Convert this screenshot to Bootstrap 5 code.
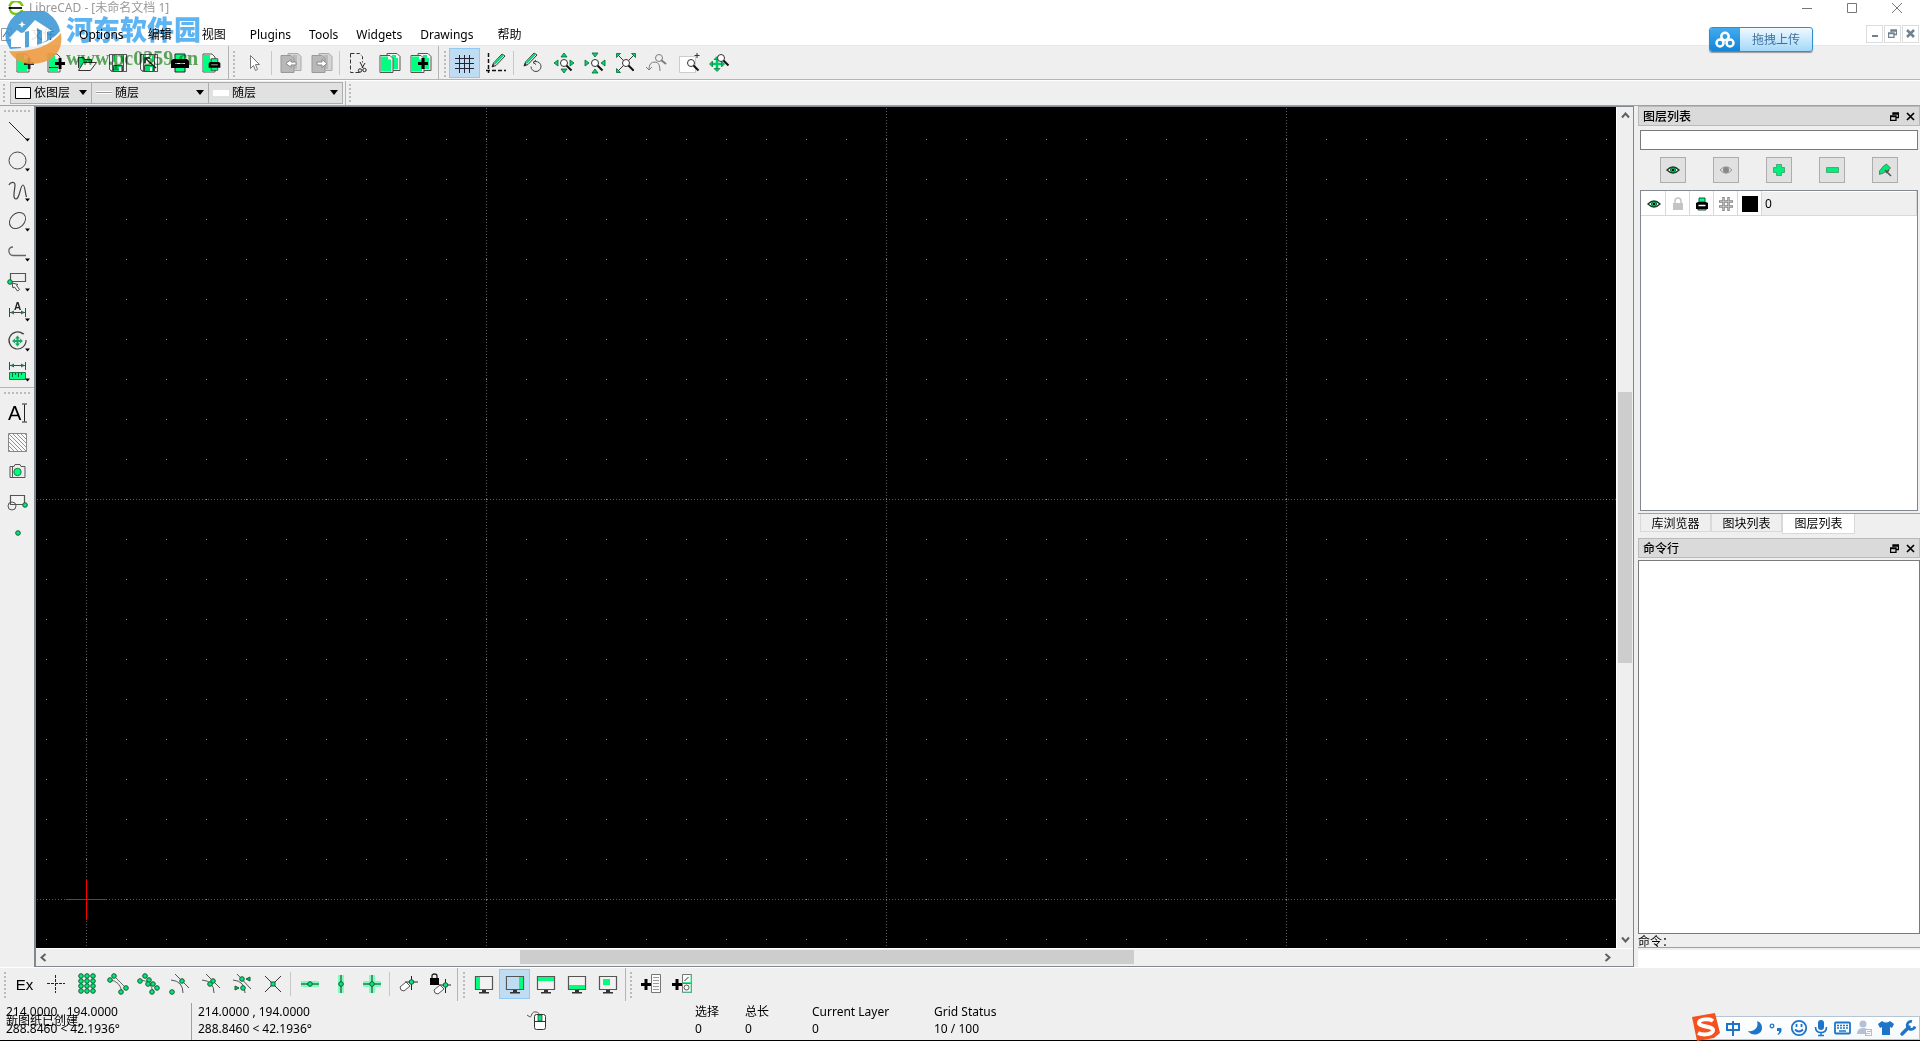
<!DOCTYPE html>
<html lang="zh-CN">
<head>
<meta charset="utf-8">
<meta name="viewport" content="width=device-width, initial-scale=1">
<title>LibreCAD - [未命名文档 1]</title>
<link href="https://cdn.jsdelivr.net/npm/bootstrap@5.3.0/dist/css/bootstrap.min.css" rel="stylesheet">
<style>
:root{--g:#00ff7f;--face:#efefef;--line:#b4b4b4}
body{font-family:"Noto Sans","Noto Sans CJK SC",sans-serif;font-size:12px;line-height:16px;color:#000;background:var(--face);height:100vh;overflow:hidden}
.titlebar{height:22px;background:#fff;color:#999;padding:0 17px 7px 8px}
.titlebar .brand{gap:5px}
.titlebar .syswin{gap:33px}
.winbtn{border:0;background:none;padding:0;width:12px;height:14px;color:#777;display:flex;align-items:center}
.menus{height:24px;background:#fff;border-bottom:1px solid #e8e8e8;padding:0 1px 0 0}
.menus .nav-link{color:#000;padding:5px 9px 3px}
.menus .nav-link.cjk{padding:5px 15px 3px}
.docicon{width:16px;height:24px}
.mdi{gap:1px}
.mdi button{width:17px;height:18px;border:1px solid #dcdcdc;background:#fff;padding:0;color:#71808f;display:flex;align-items:center;justify-content:center}
.bar{height:34px;border-bottom:1px solid var(--line)}
.bar .section{border-right:1px solid var(--line);padding:2px 2px 0 1px;height:33px}
.bar .section:last-child{border-right:0}
.grip{width:2px;height:26px;margin:3px 3px 0 3px;background:repeating-linear-gradient(#bbb 0 2px,transparent 2px 4px)}
.grip.wide{margin-left:4px}
.tool{width:31px;height:30px;padding:0;border:1px solid transparent;border-radius:0;display:flex;align-items:center;justify-content:center;color:#333;line-height:1}
.tool:hover{background:#dcebf7}
.tool.active{background:#c0dcf3!important;border-color:#90c8f6!important}
.tool.exbtn{font:15px "Liberation Sans",sans-serif;color:#000}
.split{width:1px;height:24px;background:#c8c8c8;margin:3px 3px 0 2px}
.pic{width:20px;height:20px;display:block;flex:none;overflow:visible}
.props{height:26px;border-bottom:1px solid #a0a0a0;border-top:1px solid #fff}
.props .grip{height:20px;margin-top:3px}
.combo{position:relative;margin-right:-1px}
.combo select{appearance:none;border:1px solid #adadad;background:#e1e1e1;height:22px;width:100%;border-radius:0;padding:0 16px 1px 23px;font-size:12px;line-height:18px;color:#000;margin-top:1px}
.combo svg{position:absolute;left:5px;top:6px;width:16px;height:12px;pointer-events:none}
.combo svg.tri{left:auto;right:5px;top:9px;width:8px;height:5px}
.c1{width:82px;margin-left:2px}.c2{width:118px}.c3{width:135px}
.propend{border-left:1px solid var(--line);margin-left:3px}
.side{width:34px;background:var(--face)}
.side .tool{width:34px;padding-left:1px}
.side .vgrip{height:2px;width:26px;margin:4px;background:repeating-linear-gradient(90deg,#bbb 0 2px,transparent 2px 4px)}
.side .rule{height:1px;background:var(--line);margin:1px 0 4px}
.canvasbox{border:2px solid #828790;border-top-width:1px;border-bottom-width:1px;border-right-width:1px;min-width:0}
.view{background:#000;min-height:0}
.view svg{width:100%;height:100%;display:block}
.vbar{width:17px;border-left:1px solid #fff;padding:5px 1px}
.hbar{height:18px;border-top:1px solid #fff;padding:1px 22px 2px 4px}
.thumb{background:#cdcdcd}
.arrowbtn{border:0;background:none;padding:0;color:#606060;display:flex;align-items:center;justify-content:center}
.dock{width:286px;padding-left:4px}
.docktitle{height:20px;background:#dadada;border:1px solid #b9b9b9;padding:0 4px;font-weight:400}
.docktitle h2{font-size:12px;line-height:16px;margin:0;font-family:"Noto Sans CJK SC",sans-serif}
.docktitle .acts{gap:7px}
.docktitle button{border:0;background:none;padding:0;width:9px;height:9px;display:flex;color:#000}
.filterbox{height:20px;border:1px solid #7a7a7a;border-radius:0;padding:0 3px;font-size:12px;margin:4px 2px 7px;width:auto}
.layerbtns{gap:27px;height:26px}
.layerbtns button{width:26px;height:26px;background:#e1e1e1;border:1px solid #adadad;border-radius:0;padding:0;display:flex;align-items:center;justify-content:center}
.layerlist{margin:7px 2px 2px;border:1px solid #828790;background:#fff;height:321px}
.layerlist table{width:100%;border-collapse:collapse;table-layout:fixed}
.layerlist td{height:24px;border:1px solid #d8d8d8;border-top-color:#fff;border-left-color:#fff;padding:0;width:24px}
.layerlist td .pic{width:16px;height:16px;margin:auto}
.layerlist td.lname{width:auto;background:var(--face);padding-left:3px}
.docktabs{border-top:1px solid #a0a0a0;height:25px;padding-left:2px}
.docktabs .nav-link{border:1px solid #d9d9d9;border-top:0;border-radius:0;background:var(--face);color:#000;padding:0;width:71px;height:18px;line-height:17px;text-align:center;font-family:"Noto Sans CJK SC",sans-serif}
.docktabs .nav-link.active{background:#fff;height:20px;line-height:18px;width:73px;color:#000}
.cmdlog{border:1px solid #7a7a7a;background:#fff;margin-top:2px;resize:none;border-radius:0;padding:2px;display:block;width:100%}
.cmdlabel{line-height:13px;font-family:"Noto Sans CJK SC",sans-serif;border-bottom:1px solid #a0a0a0}
.cmdinput{border:0;background:#fff;height:17px;margin-top:2px;padding:0 2px;width:100%;display:block}
.foot{border-top:1px solid #fff;border-bottom:0}
.foot .section{padding-top:1px}
.status{height:40px;border-bottom:1px solid #000;line-height:17px;padding-top:2px}
.status p{margin:0;white-space:pre}
.s1{width:191px;padding-left:6px;position:relative}
.s1 .note{position:absolute;left:6px;top:9px}
.s2{width:191px;padding-left:6px;border-left:1px solid #a0a0a0}
.s3{width:313px}.s4{width:50px}.s5{width:67px}.s6{width:122px}
.upload{position:absolute;right:107px;top:27px;width:104px;height:25px;border:1px solid #2e8fd6;border-radius:3px;padding:0;overflow:hidden;background:linear-gradient(#f0f9ff,#a3d8f8);color:#3d6f9e;box-shadow:0 1px 1px #999;font-size:12px}
.upload .cloud{width:30px;height:23px;background:linear-gradient(#41abee,#1285d8)}
.ime{position:absolute;right:0;bottom:1px;height:24px;width:217px;border:1px solid #b4c5d5;background:linear-gradient(#fff,#f6fafd);padding-left:18px;color:#1e74c8}
.ime button{border:0;background:none;padding:0;width:22px;height:22px;display:flex;align-items:center;justify-content:center;color:inherit}
.ime .slogo{position:absolute;left:-13px;top:-4px;width:30px;height:28px}
.ime .pic{width:18px;height:18px}
.wm{position:absolute;left:4px;top:11px;pointer-events:none;width:210px;height:58px}
.wm svg{width:58px;height:56px;opacity:.88}
.wm .wtext{mix-blend-mode:multiply}
.wm .w1{font:900 27px/32px "Noto Sans CJK SC",sans-serif;color:#5db4f3;margin-top:-2px}
.wm .w2{font:bold 20px/20px "Liberation Serif",serif;color:#5fae5f;margin-top:3px}
</style>
<script src="https://cdn.jsdelivr.net/npm/bootstrap@5.3.0/dist/js/bootstrap.bundle.min.js"></script>
</head>
<body class="d-flex flex-column position-relative">
<svg width="0" height="0" class="position-absolute" aria-hidden="true">
<defs>
<g id="page"><path d="M2 1h9l3 3v15h-12z" fill="#f4f4f4" stroke="#555"/><path d="M3 2h6v4h3v12H3z" fill="#00ff7f"/></g>
<g id="plus"><path d="M0 4h3.500V0h3v4H10v3H6.500v4h-3V7H0z" fill="#000"/></g>
<g id="prn"><path d="M5 1h10v6H5zM5 13h10v6H5z" fill="#00ff7f" stroke="#222"/><path d="M1 8l2-2h14l2 2v7H1z" fill="#000"/><path d="M5 10.500h10" stroke="#fff"/></g>
<g id="flop"><path d="M1.500 1.500h17v17h-15l-2-2z" fill="#e8e8e8" stroke="#555"/><path d="M1.500 1.500h3v17l-3-2zM15.500 1.500h3v17h-3z" fill="#f2f2f2" stroke="#555"/><path d="M5 2h2v7H5zM13 2h2v7h-2z" fill="#00e070"/><path d="M7 2h6v7H7z" fill="#fff"/><path d="M5.500 12.500h9v6h-9z" fill="#00d870" stroke="#444"/><path d="M11 14h2v4h-2z" fill="#fff"/></g>
<g id="pages"><path d="M7 .5h10l3 3v14H7z" fill="#f4f4f4" stroke="#555"/><path d="M12 2h4v3h2v11h-6z" fill="#00ff7f"/><path d="M0 2.500h10l3 3v14H0z" fill="#f4f4f4" stroke="#555"/><path d="M1 3.500h7v3h3v12H1z" fill="#00ff7f"/></g>
<g id="gpages"><path d="M7 .5h10l3 3v14H7z" fill="#d4d4d4" stroke="#aaa"/><path d="M12 2h4v14h-4z" fill="#bbb"/><path d="M0 2.500h10l3 3v14H0z" fill="#b8b8b8" stroke="#999"/></g>
<g id="mag"><circle cx="8" cy="8" r="3.500" fill="#fff" stroke="#333"/><path d="M10.500 10.500l5 5" stroke="#111" stroke-width="2"/></g>
<g id="pencil"><path d="M1 13l1.500-4L11 0l3 2-9 9.500z" fill="#fff" stroke="#333"/><path d="M3.500 10L12 1" stroke="#00d870" stroke-width="2"/><path d="M1 13l1-3 2 1z" fill="#222"/></g>
<g id="nd"><circle r="2.300" fill="#00e878" stroke="#155c36" stroke-width="1"/></g>
<g id="mon"><path d="M1.500 2.500h17v13h-17z" fill="#f2f2f2" stroke="#555" stroke-width="1.200"/><path d="M8 16h4v2H8zM5 18h10v1.500H5z" fill="#333"/></g>
<g id="eye"><path d="M2 8q6-6 12 0q-6 6-12 0z" fill="#fff" stroke="#153c28" stroke-width="1.400"/><circle cx="8" cy="8" r="2.500" fill="#00e878" stroke="#052"/><circle cx="8" cy="8" r="1.200"/></g>
<g id="float"><path d="M3 3V1h5.500v4.500H6.500M3 2h6M.5 4h5.500v4.500H.5zM0 4.500h6" fill="none" stroke="currentColor" stroke-width="1.300"/></g>
<g id="ex"><path d="M1 1l7 7M8 1L1 8" stroke="currentColor" stroke-width="1.700" fill="none"/></g>
<g id="more"><path d="M17 17.500h5l-2.500 3z" fill="#000"/></g>
<pattern id="dots" width="40" height="40" patternUnits="userSpaceOnUse"><rect x="10" y="32" width="1" height="1" fill="#888"/></pattern>
<pattern id="metaV" width="400" height="3" patternUnits="userSpaceOnUse"><rect x="50" y="1" width="1" height="1" fill="#5a5a5a"/></pattern>
<pattern id="metaH" width="3" height="400" patternUnits="userSpaceOnUse"><rect x="1" y="392" width="1" height="1" fill="#5a5a5a"/></pattern>
<pattern id="hat" width="4" height="4" patternUnits="userSpaceOnUse"><path d="M0 0l4 4" stroke="#666" stroke-width=".7"/></pattern>
</defs></svg>

<header class="titlebar d-flex align-items-center justify-content-between">
 <div class="brand d-flex align-items-center">
  <svg width="16" height="14" viewBox="0 0 16 14"><circle cx="8" cy="6.500" r="6.500" fill="none" stroke="#7ac70c" stroke-width="2.500"/><path d="M0 7h16" stroke="#fff" stroke-width="4"/><path d="M1 7h13" stroke="#222" stroke-width="2"/><circle cx="2" cy="7" r="1.500"/></svg>
  <span>LibreCAD - [未命名文档 1]</span>
 </div>
 <div class="syswin d-flex">
  <button class="winbtn" aria-label="最小化"><svg width="12" height="12"><path d="M1 6.500h10" stroke="currentColor"/></svg></button>
  <button class="winbtn" aria-label="最大化"><svg width="12" height="12"><path d="M1.500 1.500h9v9h-9z" fill="none" stroke="currentColor"/></svg></button>
  <button class="winbtn" aria-label="关闭"><svg width="12" height="12"><path d="M1 1l10 10M11 1L1 11" stroke="currentColor"/></svg></button>
 </div>
</header>

<div class="menus d-flex align-items-center justify-content-between">
 <nav class="nav align-items-center flex-nowrap">
  <svg class="docicon" viewBox="0 0 16 24"><path d="M1.500 6.500h10v12h-10z" fill="#fff" stroke="#999"/><path d="M3 15l4-6 5 8" fill="none" stroke="#456"/></svg>
  <a class="nav-link cjk" href="#">文件</a><a class="nav-link" href="#">Options</a><a class="nav-link cjk" href="#">编辑</a><a class="nav-link cjk" href="#">视图</a><a class="nav-link" href="#">Plugins</a><a class="nav-link" href="#">Tools</a><a class="nav-link" href="#">Widgets</a><a class="nav-link" href="#">Drawings</a><a class="nav-link cjk" href="#">帮助</a>
 </nav>
 <div class="mdi d-flex">
  <button aria-label="最小化子窗口"><svg width="9" height="9"><path d="M2 7h6" stroke="currentColor" stroke-width="2"/></svg></button>
  <button aria-label="还原子窗口"><svg width="9" height="9"><use href="#float"/></svg></button>
  <button aria-label="关闭子窗口"><svg width="9" height="9"><path d="M1 1l7 7M8 1L1 8" stroke="currentColor" stroke-width="2.500"/></svg></button>
 </div>
</div>

<div class="bar d-flex">
 <div class="section d-flex"><span class="grip"></span>
  <button class="btn tool" aria-label="新建"><svg class="pic"><use href="#page"/><g opacity=".8"><use href="#plus" x="9" y="5"/></g></svg></button>
  <button class="btn tool" aria-label="从模板新建"><svg class="pic"><use href="#page"/><path d="M3 14.500h9" stroke="#333"/><use href="#plus" x="9" y="5"/></svg></button>
  <button class="btn tool" aria-label="打开"><svg class="pic"><path d="M1.500 15V4.500h5l1 2h7v3" fill="#00e070" stroke="#333"/><path d="M1.500 17.500l5-8h13l-6 8z" fill="#f4f4f4" stroke="#333"/></svg></button>
  <button class="btn tool" aria-label="保存"><svg class="pic"><use href="#flop"/></svg></button>
  <button class="btn tool" aria-label="另存为"><svg class="pic"><use href="#flop"/><path d="M6 5l11 10M6 10V5h5" stroke="#222" stroke-width="1.500" fill="none"/></svg></button>
  <button class="btn tool" aria-label="打印"><svg class="pic"><use href="#prn"/></svg></button>
  <button class="btn tool" aria-label="打印预览"><svg class="pic"><use href="#page"/><g transform="translate(7 5) scale(.65)"><use href="#prn"/></g></svg></button>
 </div>
 <div class="section d-flex"><span class="grip"></span>
  <button class="btn tool" aria-label="选择"><svg class="pic"><path d="M6.500 2.500v13l3-3 2 5 2-1-2-5h4z" fill="#fff" stroke="#777"/></svg></button>
  <span class="split"></span>
  <button class="btn tool" aria-label="撤销"><svg class="pic"><use href="#gpages"/><path d="M5 10.500l5-4v2.500h5v3h-5v2.500z" fill="#fff" stroke="#888"/></svg></button>
  <button class="btn tool" aria-label="重做"><svg class="pic"><use href="#gpages"/><path d="M15 10.500l-5-4v2.500H5v3h5v2.500z" fill="#fff" stroke="#888"/></svg></button>
  <span class="split"></span>
  <button class="btn tool" aria-label="剪切"><svg class="pic"><path d="M1.500.500h9l3 3v6M1.500.500v19h9" fill="none" stroke="#333" stroke-dasharray="4 2"/><path d="M11 9l3 6M16 10l-3 5" stroke="#222"/><circle cx="11" cy="17.500" r="1.700" fill="none" stroke="#222"/><circle cx="15.500" cy="17" r="1.700" fill="none" stroke="#222"/></svg></button>
  <button class="btn tool" aria-label="复制"><svg class="pic"><use href="#pages"/></svg></button>
  <button class="btn tool" aria-label="粘贴"><svg class="pic"><use href="#pages"/><use href="#plus" x="7" y="5"/></svg></button>
 </div>
 <div class="section d-flex"><span class="grip wide"></span>
  <button class="btn tool active" aria-label="网格"><svg class="pic"><path d="M4.500 2v18M9.500 2v18M14.500 2v18M0 5.500h19M0 10.500h19M0 15.500h19" stroke="#223"/></svg></button>
  <button class="btn tool" aria-label="草稿模式"><svg class="pic"><path d="M2.500 0v20M0 17.500h20" stroke="#111" stroke-width="1.500" stroke-dasharray="4 2"/><use href="#pencil" x="5" y="1"/></svg></button>
  <span class="split"></span>
  <button class="btn tool" aria-label="重绘"><svg class="pic"><use href="#pencil" x="0" y="0"/><path d="M10 9.500a5 5 0 1 1-2 4M13 7l-3 2.500 3 2" fill="none" stroke="#444"/></svg></button>
  <button class="btn tool" aria-label="放大"><svg class="pic"><use href="#mag" x="2" y="2"/><g fill="#00d870" stroke="#063" stroke-width=".8"><path d="M10 0l3 4H7zM10 20l3-4H7zM0 10l4-3v6zM20 10l-4-3v6z"/></g></svg></button>
  <button class="btn tool" aria-label="缩小"><svg class="pic"><use href="#mag" x="2" y="2"/><g fill="#00d870" stroke="#063" stroke-width=".8"><path d="M10 4l3-4H7zM10 16l3 4H7zM4 10L0 7v6zM16 10l4-3v6z"/></g></svg></button>
  <button class="btn tool" aria-label="自动缩放"><svg class="pic"><path d="M2 2l16 16M18 2L2 18" stroke="#333"/><use href="#mag" x="2" y="2"/><g fill="#00d870" stroke="#063" stroke-width=".8"><path d="M.5.500h4l-4 4zM19.500.500h-4l4 4zM.5 19.500h4l-4-4z"/></g></svg></button>
  <button class="btn tool" aria-label="上一视图"><svg class="pic" opacity=".6"><circle cx="12" cy="5" r="3.500" fill="none" stroke="#333"/><path d="M14 7l5 4" stroke="#333" stroke-width="2"/><path d="M2 16q0-7 6-7 5 0 5 9M-1 14l3 3 3-3" fill="none" stroke="#333"/></svg></button>
  <button class="btn tool" aria-label="窗口缩放"><svg class="pic"><path d="M1.500 3.500h16v16h-16z" fill="#fff" stroke="#ccc"/><use href="#mag" x="5" y="2"/><path d="M19 0v5M16.500 2.500h5" stroke="#333"/></svg></button>
  <button class="btn tool" aria-label="平移"><svg class="pic"><path d="M8 5v12M2 11h12" stroke="#00c868" stroke-width="2.500"/><path d="M8 3.500l-3 3h6zM8 18.500l-3-3h6zM.5 11l3-3v6zM15.500 11l-3-3v6z" fill="#00c868" stroke="#0a7a44" stroke-width=".7"/><g transform="translate(4 -3)"><use href="#mag"/></g></svg></button>
 </div>
</div>

<div class="props d-flex"><span class="grip"></span>
 <div class="combo c1"><select aria-label="颜色"><option>依图层</option></select><svg><path d="M.5.500h15v11H.5z" fill="#fff" stroke="#000"/></svg><svg class="tri"><path d="M0 0h8L4 5z"/></svg></div>
 <div class="combo c2"><select aria-label="线宽"><option>随层</option></select><svg><path d="M0 5.500h16" stroke="#fff" stroke-width="3"/><path d="M0 5.500h16" stroke="#999"/></svg><svg class="tri"><path d="M0 0h8L4 5z"/></svg></div>
 <div class="combo c3"><select aria-label="线型"><option>随层</option></select><svg><path d="M0 3h16v6H0z" fill="#fff"/></svg><svg class="tri"><path d="M0 0h8L4 5z"/></svg></div>
 <div class="propend"><span class="grip d-block"></span></div>
</div>

<main class="d-flex flex-fill" style="min-height:0">
 <aside class="side d-flex flex-column">
  <span class="vgrip"></span>
  <button class="btn tool" aria-label="直线"><svg class="pic"><path d="M1 1l17 17" stroke="#222"/><use href="#more"/></svg></button>
  <button class="btn tool" aria-label="圆"><svg class="pic"><circle cx="9.500" cy="9.500" r="8.500" fill="none" stroke="#444"/><use href="#more"/></svg></button>
  <button class="btn tool" aria-label="曲线"><svg class="pic"><path d="M1 4C2 1 7 0 7 4 7 8 4 18 8 18 12 18 12 4 15 4 17 4 17 12 18.500 16" fill="none" stroke="#444" stroke-width="1.200"/><use href="#more"/></svg></button>
  <button class="btn tool" aria-label="椭圆"><svg class="pic"><ellipse cx="9.500" cy="9.500" rx="9" ry="7" transform="rotate(-45 9.500 9.500)" fill="none" stroke="#444"/><use href="#more"/></svg></button>
  <button class="btn tool" aria-label="多段线"><svg class="pic"><path d="M5 6C-1 6 0 14 5 14.500H18" fill="none" stroke="#666" stroke-width="1.300"/><use href="#more"/></svg></button>
  <button class="btn tool" aria-label="选择工具"><svg class="pic"><path d="M2.500 2.500h15v8h-15z" fill="none" stroke="#555" stroke-width="1.200"/><use href="#nd" x="2" y="11"/><path d="M4 12l1 5 1.500-1 3 4 2-1.500-3-4 1.500-1z" fill="#fff" stroke="#444"/><use href="#more"/></svg></button>
  <button class="btn tool" aria-label="标注"><svg class="pic"><path d="M1.500 7v9M17.500 7v9M2 11.500h15" stroke="#444"/><path d="M2 11.500l4-2v4zM17 11.500l-4-2v4z" fill="#1a7a4a"/><text x="6" y="9" font-family="Liberation Sans" font-size="10" font-weight="700" fill="#222">A</text><use href="#more"/></svg></button>
  <button class="btn tool" aria-label="修改"><svg class="pic"><path d="M15 3a8.500 8.500 0 1 0 3 6M12 1l4 2" fill="none" stroke="#444" stroke-width="1.200"/><path d="M9.500 6v8M5.500 10h8" stroke="#1aa864" stroke-width="2"/><path d="M9.500 4.500l-2.500 3h5zM9.500 15.500l-2.500-3h5zM4 10l3-2.500v5zM15 10l-3-2.500v5z" fill="#1aa864"/><use href="#more"/></svg></button>
  <button class="btn tool" aria-label="测量"><svg class="pic"><path d="M1.500 1v8M17.500 1v8M2 4.500h15" stroke="#444"/><path d="M2 4.500l4-2v4zM17 4.500l-4-2v4z" fill="#1a7a4a"/><path d="M1.500 11.500h16v7h-16z" fill="#00ff7f" stroke="#1a7a4a"/><path d="M4.500 12v4M7.500 12v2M10.500 12v4M13.500 12v2" stroke="#063"/><use href="#more"/></svg></button>
  <span class="rule"></span><span class="vgrip mt-0"></span>
  <button class="btn tool" aria-label="多行文字"><svg class="pic"><text x="0" y="17" font-family="Liberation Sans" font-size="20" fill="#000">A</text><path d="M16.500 1.500v17M14 1h5M14 19h5" stroke="#222" fill="none"/></svg></button>
  <button class="btn tool" aria-label="填充"><svg class="pic"><path d="M.5.500h18v18H.5z" fill="#fafafa"/><path d="M.5.500h18v18H.5z" fill="url(#hat)" stroke="#888"/></svg></button>
  <button class="btn tool" aria-label="图像"><svg class="pic"><path d="M2 3.500h4l1-2h5l1 2h4v11H2zM4.500 4v10" fill="#eee" stroke="#555"/><circle cx="9.500" cy="9" r="3.700" fill="#00ff7f" stroke="#1a7a4a"/></svg></button>
  <button class="btn tool" aria-label="块"><svg class="pic"><path d="M2.500 2.500h14v9h-14z" fill="#f4f4f4" stroke="#555" stroke-width="1.200"/><circle cx="4" cy="13" r="4" fill="none" stroke="#555"/><use href="#nd" x="17" y="12"/></svg></button>
  <button class="btn tool" aria-label="点"><svg class="pic"><use href="#nd" x="10" y="10"/></svg></button>
 </aside>

 <section class="canvasbox flex-fill d-flex flex-column">
  <div class="d-flex flex-fill" style="min-height:0">
   <div class="view flex-fill">
    <svg shape-rendering="crispEdges" role="img" aria-label="绘图区">
     <rect width="100%" height="100%" fill="url(#metaV)"/><rect width="100%" height="100%" fill="url(#metaH)"/><rect width="100%" height="100%" fill="url(#dots)"/>
     <path d="M30 792.500h41M50.500 772v41" stroke="#f00"/>
    </svg>
   </div>
   <div class="vbar d-flex flex-column">
    <button class="arrowbtn" aria-label="上移"><svg width="9" height="7"><path d="M1 5.500l3.500-4 3.500 4" fill="none" stroke="currentColor" stroke-width="2"/></svg></button>
    <div style="flex:273"></div><div class="thumb" style="flex:271"></div><div style="flex:273"></div>
    <button class="arrowbtn" aria-label="下移"><svg width="9" height="7"><path d="M1 1.500l3.500 4 3.500-4" fill="none" stroke="currentColor" stroke-width="2"/></svg></button>
   </div>
  </div>
  <div class="hbar d-flex">
   <button class="arrowbtn" aria-label="左移"><svg width="7" height="9"><path d="M5.500 1l-4 3.500 4 3.500" fill="none" stroke="currentColor" stroke-width="2"/></svg></button>
   <div style="flex:473"></div><div class="thumb" style="flex:613"></div><div style="flex:470"></div>
   <button class="arrowbtn" aria-label="右移"><svg width="7" height="9"><path d="M1.500 1l4 3.500-4 3.500" fill="none" stroke="currentColor" stroke-width="2"/></svg></button>
  </div>
 </section>

 <aside class="dock d-flex flex-column">
  <div class="docktitle d-flex align-items-center justify-content-between flex-shrink-0"><h2>图层列表</h2><span class="acts d-flex"><button aria-label="浮动"><svg width="9" height="9"><use href="#float"/></svg></button><button aria-label="关闭图层列表"><svg width="9" height="9"><use href="#ex"/></svg></button></span></div>
  <input class="filterbox flex-shrink-0" type="text" aria-label="图层过滤">
  <div class="layerbtns d-flex justify-content-center flex-shrink-0">
   <button aria-label="显示全部图层"><svg width="16" height="16"><use href="#eye"/></svg></button>
   <button aria-label="隐藏全部图层"><svg width="16" height="16"><path d="M2 8q6-6.500 12 0q-6 6.500-12 0z" fill="#ddd" stroke="#999"/><circle cx="8" cy="8" r="3" fill="#888"/></svg></button>
   <button aria-label="添加图层"><svg width="16" height="16"><path d="M5.500 2.500h5v3h3v5h-3v3h-5v-3h-3v-5h3z" fill="#00f07a" stroke="#4aa87a"/></svg></button>
   <button aria-label="删除图层"><svg width="16" height="16"><path d="M2.500 5.500h12v5h-12z" fill="#00f07a" stroke="#4aa87a"/></svg></button>
   <button aria-label="编辑图层"><svg width="16" height="16"><path d="M2.500 12.500V9l4-5 3-2 4 4-2 2-5 3z" fill="#00e878" stroke="#555" stroke-width=".7"/><path d="M8 8l6 6M9 11l3-3" stroke="#555" stroke-width="1.600"/></svg></button>
  </div>
  <div class="layerlist flex-shrink-0">
   <table aria-label="图层"><tbody><tr>
    <td><svg class="pic"><use href="#eye"/></svg></td>
    <td><svg class="pic"><path d="M3 7h10v7H3z" fill="#c4c4c4"/><path d="M5 7V5q0-3 3-3t3 3v2" fill="none" stroke="#c4c4c4" stroke-width="1.500"/></svg></td>
    <td><svg class="pic"><path d="M5 2h6v4H5zM4 11h8v3H4z" fill="#00ff7f" stroke="#154"/><path d="M2 7l2-1h8l2 1v6H2z"/><path d="M4.500 9.500h7" stroke="#fff" stroke-width="1.500"/></svg></td>
    <td><svg class="pic"><path d="M5.500 1v14M10.500 1v14M1 5.500h14M1 10.500h14" stroke="#888" stroke-width="2.500"/><path d="M5.500 2v12M10.500 2v12M2 5.500h12M2 10.500h12" stroke="#ccc" stroke-width=".7"/></svg></td>
    <td><svg class="pic"><path d="M0 0h16v16H0z"/></svg></td>
    <td class="lname">0</td></tr></tbody></table>
  </div>
  <nav class="docktabs nav flex-nowrap align-items-start flex-shrink-0"><a class="nav-link" href="#">库浏览器</a><a class="nav-link" href="#">图块列表</a><a class="nav-link active" href="#">图层列表</a></nav>
  <div class="docktitle d-flex align-items-center justify-content-between flex-shrink-0"><h2>命令行</h2><span class="acts d-flex"><button aria-label="浮动命令行"><svg width="9" height="9"><use href="#float"/></svg></button><button aria-label="关闭命令行"><svg width="9" height="9"><use href="#ex"/></svg></button></span></div>
  <textarea class="cmdlog flex-fill" readonly aria-label="命令历史"></textarea>
  <label class="cmdlabel flex-shrink-0" for="cmd">命令：</label>
  <input class="cmdinput flex-shrink-0" id="cmd" type="text">
 </aside>
</main>

<div class="bar foot d-flex">
 <div class="section d-flex"><span class="grip"></span>
  <button class="btn tool exbtn" aria-label="独占捕捉">Ex</button>
  <button class="btn tool" aria-label="自由捕捉"><svg class="pic"><path d="M9.500 1v18M1 9.500h18" stroke="#222" stroke-dasharray="3 1"/></svg></button>
  <button class="btn tool" aria-label="捕捉网格"><svg class="pic"><g transform="translate(0 -1)"><use href="#nd" x="4" y="3"/><use href="#nd" x="10" y="3"/><use href="#nd" x="16" y="3"/><use href="#nd" x="4" y="8"/><use href="#nd" x="10" y="8"/><use href="#nd" x="16" y="8"/><use href="#nd" x="4" y="13"/><use href="#nd" x="10" y="13"/><use href="#nd" x="16" y="13"/><use href="#nd" x="4" y="18"/><use href="#nd" x="10" y="18"/><use href="#nd" x="16" y="18"/></g></svg></button>
  <button class="btn tool" aria-label="捕捉端点"><svg class="pic"><path d="M6 2l12 12M2 6q10 1 12 12" fill="none" stroke="#666"/><use href="#nd" x="6" y="2"/><use href="#nd" x="2" y="6"/><use href="#nd" x="18" y="14"/><use href="#nd" x="13" y="18"/></svg></button>
  <button class="btn tool" aria-label="捕捉实体上的点"><svg class="pic"><path d="M6 2l12 12M2 6q10 1 12 12" fill="none" stroke="#666"/><use href="#nd" x="6" y="2"/><use href="#nd" x="1" y="7"/><use href="#nd" x="10" y="6"/><use href="#nd" x="9" y="10"/><use href="#nd" x="14" y="10"/><use href="#nd" x="18" y="14"/><use href="#nd" x="13" y="18"/></svg></button>
  <button class="btn tool" aria-label="捕捉中心"><svg class="pic"><path d="M5 0l14 14M1 6q12 1 12 13" fill="none" stroke="#555"/><use href="#nd" x="12" y="7"/><use href="#nd" x="2" y="18"/></svg></button>
  <button class="btn tool" aria-label="捕捉中点"><svg class="pic"><path d="M5 0l14 14M1 6q12 1 12 13" fill="none" stroke="#555"/><use href="#nd" x="12" y="7"/><use href="#nd" x="9" y="10"/></svg></button>
  <button class="btn tool" aria-label="捕捉距离"><svg class="pic"><path d="M5 0l14 15M1 6q12 1 12 13" fill="none" stroke="#555"/><use href="#nd" x="10" y="5"/><use href="#nd" x="11" y="14"/><path d="M18 3v4l-4-2zM3 12v4l4-2z" fill="#00c868" stroke="#155c36"/></svg></button>
  <button class="btn tool" aria-label="捕捉交点"><svg class="pic"><path d="M2 2l16 16M18 2L2 18" stroke="#333"/><path d="M8 8h4v4H8z" fill="#00e878" stroke="#155c36"/></svg></button>
  <span class="split"></span>
  <button class="btn tool" aria-label="限制水平"><svg class="pic"><path d="M1 10h18" stroke="#7dffbd" stroke-width="6"/><path d="M1 10h18" stroke="#222"/><use href="#nd" x="10" y="10"/></svg></button>
  <button class="btn tool" aria-label="限制垂直"><svg class="pic"><path d="M10 1v18" stroke="#7dffbd" stroke-width="6"/><path d="M10 1v18" stroke="#222"/><use href="#nd" x="10" y="10"/></svg></button>
  <button class="btn tool" aria-label="限制正交"><svg class="pic"><path d="M10 1v18M1 10h18" stroke="#7dffbd" stroke-width="6"/><path d="M10 1v18M1 10h18" stroke="#222"/><use href="#nd" x="10" y="10"/></svg></button>
  <span class="split"></span>
  <button class="btn tool" aria-label="设置相对零点"><svg class="pic"><path d="M12.500 2v14M6 8h13" stroke="#222"/><use href="#nd" x="12.500" y="8"/><path d="M1 13l6-5 4 4-6 5-3-1z" fill="#fff" stroke="#555"/></svg></button>
  <button class="btn tool" aria-label="锁定相对零点"><svg class="pic"><path d="M0 4h9v7H0z"/><path d="M2 4V2q0-2 2.500-2T7 2v2" fill="none" stroke="#222" stroke-width="1.300"/><path d="M15.500 5v14M9 11h12" stroke="#222"/><use href="#nd" x="15.500" y="11"/><path d="M4 16l6-5 4 4-6 5-3-1z" fill="#fff" stroke="#555"/></svg></button>
 </div>
 <div class="section d-flex"><span class="grip wide"></span>
  <button class="btn tool" aria-label="左侧停靠"><svg class="pic"><use href="#mon"/><path d="M2 3h4v12H2z" fill="#00ff7f"/></svg></button>
  <button class="btn tool active" aria-label="右侧停靠"><svg class="pic"><use href="#mon"/><path d="M2 3h12v12H2z" fill="#c0dcf3"/><path d="M14 3h4v12h-4z" fill="#00ff7f"/></svg></button>
  <button class="btn tool" aria-label="顶部停靠"><svg class="pic"><use href="#mon"/><path d="M2 3h16v4H2z" fill="#00ff7f"/></svg></button>
  <button class="btn tool" aria-label="底部停靠"><svg class="pic"><use href="#mon"/><path d="M2 11h16v4H2z" fill="#00ff7f"/></svg></button>
  <button class="btn tool" aria-label="浮动停靠"><svg class="pic"><use href="#mon"/><path d="M5 5h7v6H5z" fill="#00ff7f"/></svg></button>
 </div>
 <div class="section d-flex"><span class="grip"></span>
  <button class="btn tool" aria-label="添加菜单"><svg class="pic"><use href="#plus" y="5"/><path d="M10.500.500h9v18h-9z" fill="#fafafa" stroke="#777"/><path d="M12 3.500h6M12 6.500h6M12 9.500h6M12 12.500h6M12 15.500h6" stroke="#999"/></svg></button>
  <button class="btn tool" aria-label="添加工具栏"><svg class="pic"><use href="#plus" y="5"/><path d="M10.500.500h9v18h-9zM10 9.500h9" fill="#fafafa" stroke="#777"/><path d="M19 1v17h-8M11 8.500h8" fill="none" stroke="#40e890"/><path d="M12.500 7l4-4" stroke="#333"/><circle cx="14.500" cy="13.500" r="2.500" fill="none" stroke="#555"/></svg></button>
 </div>
</div>

<footer class="status d-flex">
 <div class="s1"><p>214.0000 , 194.0000</p><p>288.8460 &lt; 42.1936°</p><span class="note">新图纸已创建,</span></div>
 <div class="s2"><p>214.0000 , 194.0000</p><p>288.8460 &lt; 42.1936°</p></div>
 <div class="s3 d-flex align-items-center justify-content-center"><svg class="pic"><path d="M-2 3l3 2c2 0 1-6 6-5 3 0 3 2 4 4" fill="none" stroke="#555"/><rect x="5.500" y="2.500" width="11" height="15" rx="2" fill="#fff" stroke="#333"/><path d="M9 3h4v6H9z" fill="#00e878" stroke="#333" stroke-width=".7"/><path d="M5.500 9.500h11" stroke="#333"/></svg></div>
 <div class="s4"><p>选择</p><p>0</p></div><div class="s5"><p>总长</p><p>0</p></div><div class="s6"><p>Current Layer</p><p>0</p></div><div><p>Grid Status</p><p>10 / 100</p></div>
</footer>

<button class="upload d-flex align-items-center"><span class="cloud d-flex align-items-center justify-content-center"><svg width="20" height="18" fill="none" stroke="#fff" stroke-width="2.500"><circle cx="10" cy="5.500" r="3.700"/><circle cx="5" cy="12" r="3.500"/><circle cx="15" cy="12" r="3.500"/></svg></span><span class="flex-fill text-center">拖拽上传</span></button>

<div class="ime d-flex">
 <svg class="slogo" viewBox="0 0 30 28"><path d="M1 4L24 0l5 20-6 5-17 3z" fill="#f4511e"/><path d="M22 8C18 5 8 6 8 10s14 3 14 7-9 6-15 3" fill="none" stroke="#fff" stroke-width="4"/></svg>
 <button aria-label="中文输入"><svg class="pic" fill="none" stroke="currentColor" stroke-width="2"><path d="M3 5h12v6H3zM9 2v15"/></svg></button>
 <button aria-label="半角"><svg class="pic" fill="currentColor"><path d="M11 2c2 6-2 11-9 10 4 6 14 4 14-3 0-4-2-6-5-7z"/></svg></button>
 <button aria-label="中文标点"><svg class="pic"><circle cx="4" cy="7" r="1.800" fill="none" stroke="currentColor" stroke-width="1.300"/><path d="M9 9h4q2 4-3 7l-.5-1q2-1 1.500-3H9z" fill="currentColor"/></svg></button>
 <button aria-label="表情"><svg class="pic" fill="none" stroke="currentColor" stroke-width="1.800"><circle cx="9" cy="9" r="7.200"/><path d="M6.500 5v3M11.500 5v3M5 10.500q4 4 8 0"/></svg></button>
 <button aria-label="语音"><svg class="pic"><rect x="6" y="1" width="6" height="10" rx="3" fill="currentColor"/><path d="M3.500 8q0 5.500 5.500 5.500T14.500 8M9 13v3M6 16.500h6" fill="none" stroke="currentColor" stroke-width="1.600"/></svg></button>
 <button aria-label="软键盘"><svg class="pic"><rect x="2" y="3.500" width="15" height="11" rx="1" fill="none" stroke="currentColor" stroke-width="1.800"/><path d="M4 6.500h11M4 9h11" stroke="currentColor" stroke-width="1.500" stroke-dasharray="2 1"/><path d="M6 12h7" stroke="currentColor" stroke-width="1.500"/></svg></button>
 <button aria-label="账号"><svg class="pic"><g fill="#b5c0d6"><circle cx="8" cy="5" r="3.500"/><path d="M2 15q0-6 6-6 3 0 4 1v5z"/><path d="M10 10h7v7h-7z"/></g><path d="M15.500 11.500h-4v2h4v2h-4" fill="none" stroke="#fff"/></svg></button>
 <button aria-label="皮肤"><svg class="pic" fill="currentColor"><path d="M5 2q4 3 8 0l4 3-2 4-2-1v8H5V8L3 9 1 5z"/></svg></button>
 <button aria-label="设置"><svg class="pic" fill="none" stroke="currentColor"><path d="M3 15l7-7" stroke-width="3.500" stroke-linecap="round"/><path d="M13 2.500a4 4 0 1 0 3 5" stroke-width="2.800"/></svg></button>
</div>

<div class="wm d-flex">
 <svg viewBox="0 0 58 56"><path d="M2 30A26 26 0 0 1 56 20Q44 36 6 38z" fill="#3b97d6"/><path d="M5 40Q40 42 57 22 60 44 40 51 16 58 5 40z" fill="#f09a3e"/><path d="M7 36V28l-2-1 8-8 8 6-4 1v10zM17 37V22l4-1v16zM25 36V20l-5 1 11-12 17 11-5 1v8l-5 3V20l-5-3v18z" fill="#fff"/><path d="M18 10l1 2.500 2.500 1-2.500 1-1 2.500-1-2.500-2.500-1 2.500-1z" fill="#fff"/></svg>
 <div class="wtext ms-1 mt-1"><div class="w1">河东软件园</div><div class="w2">www.pc0359.cn</div></div>
</div>
</body>
</html>
